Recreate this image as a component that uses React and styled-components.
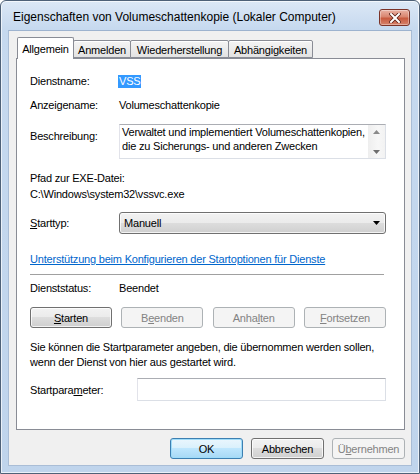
import React from 'react';
import styled, { createGlobalStyle } from 'styled-components';

const Global = createGlobalStyle`
  html, body { margin: 0; padding: 0; background: #ffffff; }
  body { font-family: "Liberation Sans", Arial, sans-serif; font-size: 11px; color: #000; }
  #root { width: 420px; height: 474px; }
  * { box-sizing: border-box; }
`;

const Window = styled.div`
  width: 420px;
  height: 474px;
  border: 1px solid #4e6178;
  border-radius: 6px 6px 0 0;
  background: linear-gradient(#dce8f6 0px, #c6d9ef 28px, #bfd4ec 100%);
  box-shadow: inset 0 0 0 1px rgba(255, 255, 255, 0.65);
  display: flex;
  flex-direction: column;
  padding: 0 7px 7px 7px;
`;

const TitleBar = styled.div`
  height: 29px;
  display: flex;
  align-items: center;
  justify-content: space-between;
  padding-left: 5px;
`;

const TitleText = styled.div`
  font-family: "Liberation Sans", Arial, sans-serif;
  font-size: 12px;
  margin-top: 2px;
  color: #000;
`;

const CloseButton = styled.div`
  width: 31px;
  height: 17px;
  margin-top: 4px;
  margin-right: 2px;
  border: 1px solid #7b3328;
  border-radius: 3px;
  background: linear-gradient(#eab2a4 0%, #d98670 45%, #c85a3f 55%, #d5826b 100%);
  box-shadow: inset 0 0 0 1px rgba(255, 255, 255, 0.35);
  display: flex;
  align-items: center;
  justify-content: center;
`;

const Client = styled.div`
  flex: 1;
  background: #f0f0f0;
  border: 1px solid #a9bdd6;
  border-top-color: #9db3cf;
  display: flex;
  flex-direction: column;
  padding: 6px 6px 6px 7px;
  letter-spacing: -0.2px;
`;

const TabRow = styled.div`
  height: 21px;
  display: flex;
  align-items: flex-end;
  padding-left: 1px;
  position: relative;
  z-index: 1;
`;

const Tab = styled.div`
  width: ${(p) => p.$w}px;
  height: ${(p) => (p.$active ? 22 : 18)}px;
  margin-left: ${(p) => (p.$first ? 0 : -1)}px;
  margin-bottom: ${(p) => (p.$active ? -1 : 0)}px;
  border: 1px solid #898c95;
  border-bottom: ${(p) => (p.$active ? 'none' : '1px solid #898c95')};
  border-radius: 2px 2px 0 0;
  background: ${(p) =>
    p.$active ? '#ffffff' : 'linear-gradient(#f4f4f4 0%, #ececec 50%, #e2e2e2 100%)'};
  box-shadow: ${(p) => (p.$active ? 'none' : 'inset 0 1px 0 #ffffff')};
  display: flex;
  align-items: center;
  justify-content: center;
  padding-top: ${(p) => (p.$active ? 0 : 1)}px;
  white-space: nowrap;
`;

const Panel = styled.div`
  flex: 1;
  width: 389px;
  background: #ffffff;
  border: 1px solid #898c95;
  display: flex;
  flex-direction: column;
  padding: 15px 18px 0 13px;
`;

const Row = styled.div`
  display: grid;
  grid-template-columns: ${(p) => p.$label || 89}px 1fr;
  align-items: ${(p) => p.$align || 'center'};
  margin-top: ${(p) => p.$mt || 0}px;
  line-height: 14px;
`;

const Label = styled.div`
  padding-top: ${(p) => p.$pt || 0}px;
  white-space: nowrap;
`;

const Line = styled.div`
  margin-top: ${(p) => p.$mt || 0}px;
  line-height: ${(p) => p.$lh || 14}px;
  white-space: nowrap;
`;

const Selected = styled.span`
  background: #3399ff;
  color: #ffffff;
  padding: 0 1px;
  margin-left: -1px;
  line-height: 13px;
  display: inline-block;
`;

const TextArea = styled.div`
  height: 35px;
  border: 1px solid #dbdfe6;
  border-top-color: #abadb3;
  border-left-color: #e2e3ea;
  display: flex;
  background: #fff;
`;

const TextAreaText = styled.div`
  flex: 1;
  padding: 0 2px;
  line-height: 14px;
  white-space: nowrap;
  overflow: hidden;
`;

const ScrollBar = styled.div`
  width: 17px;
  background: linear-gradient(90deg, #eeeeee, #f7f7f7 60%, #f2f2f2);
  display: flex;
  flex-direction: column;
  justify-content: space-between;
  align-items: center;
  padding: 5px 0 4px;
`;

const Combo = styled.div`
  height: 22px;
  border: 1px solid #707070;
  border-radius: 3px;
  background: linear-gradient(#f2f2f2 0%, #ebebeb 49%, #dddddd 50%, #cfcfcf 100%);
  box-shadow: inset 0 0 0 1px rgba(255, 255, 255, 0.75);
  display: flex;
  align-items: center;
  justify-content: space-between;
  padding: 0 5px 0 4px;
`;

const Link = styled.div`
  margin-top: ${(p) => p.$mt || 0}px;
  line-height: 14px;
  color: #0066cc;
  text-decoration: underline;
  white-space: nowrap;
`;

const Separator = styled.div`
  margin-top: ${(p) => p.$mt || 0}px;
  margin-right: 2px;
  height: 1px;
  background: #a0a0a0;
`;

const ButtonRow = styled.div`
  display: flex;
  justify-content: space-between;
  margin-top: ${(p) => p.$mt || 0}px;
`;

const Button = styled.div`
  width: ${(p) => p.$w || 82}px;
  height: 21px;
  border-radius: 3px;
  border: 1px solid ${(p) => (p.$disabled ? '#adb2b5' : p.$default ? '#3c7fb1' : '#707070')};
  background: ${(p) =>
    p.$disabled
      ? '#f4f4f4'
      : p.$default
      ? 'linear-gradient(#eaf6fd 0%, #d9f0fc 49%, #bee6fd 50%, #a7d9f5 100%)'
      : 'linear-gradient(#f2f2f2 0%, #ebebeb 49%, #dddddd 50%, #cfcfcf 100%)'};
  box-shadow: ${(p) =>
    p.$disabled ? 'none' : p.$default ? 'inset 0 0 0 1px #9fdcf9' : 'inset 0 0 0 1px rgba(255,255,255,0.75)'};
  color: ${(p) => (p.$disabled ? '#838383' : '#000')};
  display: flex;
  align-items: center;
  justify-content: center;
  white-space: nowrap;
`;

const TextInput = styled.div`
  height: 23px;
  border: 1px solid #dbdfe6;
  border-top-color: #abadb3;
  border-left-color: #e2e3ea;
  background: #fff;
`;

const BottomBar = styled.div`
  display: flex;
  justify-content: flex-end;
  gap: 8px;
  margin-top: 8px;
`;

const Arrow = ({ dir = 'down', color = '#000', w = 7, h = 4 }) => (
  <svg width={w} height={h} viewBox={`0 0 ${w} ${h}`}>
    {dir === 'down' ? (
      <polygon points={`0,0 ${w},0 ${w / 2},${h}`} fill={color} />
    ) : (
      <polygon points={`0,${h} ${w},${h} ${w / 2},0`} fill={color} />
    )}
  </svg>
);

export default function App() {
  return (
    <>
      <Global />
      <Window>
        <TitleBar>
          <TitleText>Eigenschaften von Volumeschattenkopie (Lokaler Computer)</TitleText>
          <CloseButton>
            <svg width="12" height="10" viewBox="0 0 12 10">
              <path d="M2 1 L10 9 M10 1 L2 9" stroke="#5a1f16" strokeWidth="3.6" strokeLinecap="square" />
              <path d="M2 1 L10 9 M10 1 L2 9" stroke="#ffffff" strokeWidth="2" strokeLinecap="square" />
            </svg>
          </CloseButton>
        </TitleBar>
        <Client>
          <TabRow>
            <Tab $w={57} $first $active>Allgemein</Tab>
            <Tab $w={58}>Anmelden</Tab>
            <Tab $w={99}>Wiederherstellung</Tab>
            <Tab $w={85}>Abhängigkeiten</Tab>
          </TabRow>
          <Panel>
            <Row>
              <Label>Dienstname:</Label>
              <div><Selected>VSS</Selected></div>
            </Row>
            <Row $mt={10}>
              <Label>Anzeigename:</Label>
              <div>Volumeschattenkopie</div>
            </Row>
            <Row $mt={12} $align="start">
              <Label $pt={5}>Beschreibung:</Label>
              <TextArea>
                <TextAreaText>
                  Verwaltet und implementiert Volumeschattenkopien,
                  <br />
                  die zu Sicherungs- und anderen Zwecken
                </TextAreaText>
                <ScrollBar>
                  <Arrow dir="up" color="#8a8a8a" />
                  <Arrow dir="down" color="#6e6e6e" />
                </ScrollBar>
              </TextArea>
            </Row>
            <Line $mt={12}>Pfad zur EXE-Datei:</Line>
            <Line $mt={2}>C:\Windows\system32\vssvc.exe</Line>
            <Row $mt={11}>
              <Label>
                <u>S</u>tarttyp:
              </Label>
              <Combo>
                <span>Manuell</span>
                <Arrow dir="down" color="#000" />
              </Combo>
            </Row>
            <Link $mt={18}>Unterstützung beim Konfigurieren der Startoptionen für Dienste</Link>
            <Separator $mt={8} />
            <Row $mt={6}>
              <Label>Dienststatus:</Label>
              <div>Beendet</div>
            </Row>
            <ButtonRow $mt={12}>
              <Button>
                <u>S</u>tarten
              </Button>
              <Button $disabled>
                B<u>e</u>enden
              </Button>
              <Button $disabled>
                Anha<u>l</u>ten
              </Button>
              <Button $disabled>
                <u>F</u>ortsetzen
              </Button>
            </ButtonRow>
            <Line $mt={12} $lh={15}>
              Sie können die Startparameter angeben, die übernommen werden sollen,
            </Line>
            <Line $lh={15}>wenn der Dienst von hier aus gestartet wird.</Line>
            <Row $mt={8} $label={107}>
              <Label>
                Startpara<u>m</u>eter:
              </Label>
              <TextInput />
            </Row>
          </Panel>
          <BottomBar>
            <Button $w={73} $default>OK</Button>
            <Button $w={73}>Abbrechen</Button>
            <Button $w={73} $disabled>
              Ü<u>b</u>ernehmen
            </Button>
          </BottomBar>
        </Client>
      </Window>
    </>
  );
}
